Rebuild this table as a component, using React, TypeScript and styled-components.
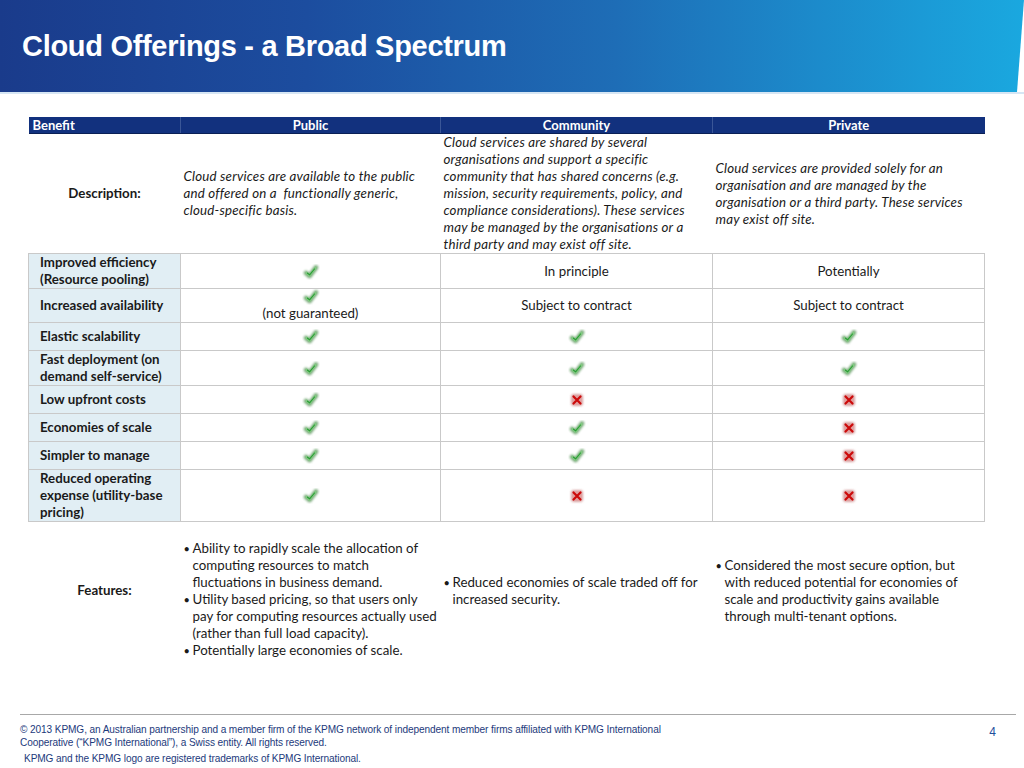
import React from "react";
import styled, { createGlobalStyle } from "styled-components";

const Global = createGlobalStyle`
  html, body { margin: 0; padding: 0; background: #ffffff; }
  body { font-family: "Lato", "Liberation Sans", sans-serif; }
`;

const Page = styled.div`
  width: 1024px;
  height: 768px;
  display: flex;
  flex-direction: column;
  overflow: hidden;
  background: #fff;
`;

const Banner = styled.header`
  height: 92px;
  display: flex;
  align-items: center;
  padding-left: 22px;
  box-sizing: border-box;
  background: linear-gradient(90deg, #1a3b8b 0%, #1c4d9f 30%, #1e6db6 60%, #1b9ad6 90%, #1aa8df 100%);
  clip-path: polygon(0 0, 100% 0, 1017px 100%, 0 100%);
`;

const BannerRule = styled.div`
  height: 2px;
  background: #d6e6f4;
`;

const Title = styled.h1`
  margin: 0;
  font-family: "Liberation Sans", Arial, sans-serif;
  font-weight: bold;
  font-size: 29px;
  color: #ffffff;
  letter-spacing: -0.3px;
`;

const TableWrap = styled.div`
  padding: 23px 0 0 28px;
`;

const Table = styled.table`
  border-collapse: collapse;
  table-layout: fixed;
  width: 956px;
  font-size: 13.3px;
  line-height: 17px;
  color: #1a1a1a;
`;

const HeadCell = styled.th<{ $left?: boolean }>`
  background: #12317e;
  color: #fff;
  font-weight: bold;
  font-size: 13px;
  height: 16px;
  padding: 0 4px;
  line-height: 16px;
  text-align: ${(p) => (p.$left ? "left" : "center")};
  border-left: 1px solid #3a5697;
  border-bottom: 1px solid #0a1f55;
  &:first-child { border-left: none; }
`;

const LabelCell = styled.td<{ $plain?: boolean }>`
  padding: 0 2px 0 11px;
  font-weight: bold;
  vertical-align: middle;
  text-align: left;
  background: ${(p) => (p.$plain ? "transparent" : "#e1eef4")};
  border: ${(p) => (p.$plain ? "none" : "1px solid #c9c9c9")};
  ${(p) => (p.$plain ? "text-align: center; padding: 0;" : "")}
`;

const Cell = styled.td<{ $h?: number }>`
  height: ${(p) => (p.$h ? `${p.$h}px` : "auto")};
  padding: 0;
  text-align: center;
  vertical-align: middle;
  border: 1px solid #c9c9c9;
`;

const DescRow = styled.tr`
  height: 116px;
  border-bottom: 1px solid #c9c9c9;
`;

const DescCell = styled.td`
  padding: 0 3px;
  vertical-align: middle;
  font-style: italic;
  letter-spacing: 0.2px;
  text-align: left;
`;

const FeatureCell = styled.td<{ $top?: number }>`
  padding: ${(p) => (p.$top ? `${p.$top}px` : "0")} 3px 0 3px;
  vertical-align: middle;
  text-align: left;
  height: 138px;
  box-sizing: border-box;
`;

const BulletList = styled.ul`
  list-style: none;
  margin: 0;
  padding: 0;
`;

const Bullet = styled.li`
  padding-left: 9px;
  text-indent: -9px;
  &::before {
    content: "•";
    display: inline-block;
    width: 9px;
    text-indent: 0;
    font-size: 11px;
  }
`;

const IconBox = styled.span`
  display: inline-flex;
  vertical-align: middle;
`;

const Stack = styled.div`
  display: flex;
  flex-direction: column;
  align-items: center;
  line-height: 17px;
`;

const Footer = styled.footer`
  margin: auto 8px 0 20px;
  border-top: 1px solid #a8a8a8;
  padding: 8px 0 3px 0;
  display: grid;
  grid-template-columns: 1fr auto;
  font-family: "Liberation Sans", Arial, sans-serif;
  color: #1d3a7c;
`;

const FooterText = styled.div`
  font-size: 10.1px;
  line-height: 13px;
  letter-spacing: -0.1px;
`;

const FooterNote = styled.div`
  margin-top: 3px;
  padding-left: 4px;
`;

const PageNum = styled.div`
  font-size: 12px;
  color: #1f4f9c;
  padding-right: 20px;
  padding-top: 2px;
`;

const Check = () => (
  <IconBox>
    <svg width="18" height="16" viewBox="0 0 18 16">
      <defs>
        <filter id="cb" x="-50%" y="-50%" width="200%" height="200%">
          <feGaussianBlur stdDeviation="1.2" />
        </filter>
      </defs>
      <path d="M4 9 L7.5 12 L14 3.5" fill="none" stroke="#5f9a5f" strokeWidth="4.8" strokeLinecap="round" strokeLinejoin="round" filter="url(#cb)" opacity="0.8" />
      <path d="M4.5 9 L7.5 11.5 L13.5 4" fill="none" stroke="#82c882" strokeWidth="2.6" strokeLinecap="round" strokeLinejoin="round" />
      <path d="M5.5 9.2 L7.6 10.8 L12.5 5" fill="none" stroke="#2a9b35" strokeWidth="1.1" strokeLinecap="round" strokeLinejoin="round" />
    </svg>
  </IconBox>
);

const Cross = () => (
  <IconBox>
    <svg width="18" height="18" viewBox="0 0 18 18">
      <defs>
        <filter id="xb" x="-50%" y="-50%" width="200%" height="200%">
          <feGaussianBlur stdDeviation="1.2" />
        </filter>
      </defs>
      <rect x="3" y="3" width="12" height="12" rx="3" fill="#c98080" opacity="0.75" filter="url(#xb)" />
      <rect x="4" y="4" width="10" height="10" rx="2" fill="#e2a3a3" opacity="0.8" />
      <path d="M5.5 5.5 L12.5 12.5 M12.5 5.5 L5.5 12.5" stroke="#cc0a0a" strokeWidth="2.2" strokeLinecap="round" />
    </svg>
  </IconBox>
);

type Mark = "check" | "cross" | string;

const rows: { label: React.ReactNode; h: number; pub: React.ReactNode; com: Mark; pri: Mark }[] = [
  { label: <>Improved efficiency<br />(Resource pooling)</>, h: 33, pub: "check", com: "In principle", pri: "Potentially" },
  {
    label: "Increased availability",
    h: 33,
    pub: (
      <Stack>
        <Check />
        <span>(not guaranteed)</span>
      </Stack>
    ),
    com: "Subject to contract",
    pri: "Subject to contract",
  },
  { label: "Elastic scalability", h: 27, pub: "check", com: "check", pri: "check" },
  { label: <>Fast deployment (on<br />demand self-service)</>, h: 34, pub: "check", com: "check", pri: "check" },
  { label: "Low upfront costs", h: 27, pub: "check", com: "cross", pri: "cross" },
  { label: "Economies of scale", h: 27, pub: "check", com: "check", pri: "cross" },
  { label: "Simpler to manage", h: 27, pub: "check", com: "check", pri: "cross" },
  { label: <>Reduced operating<br />expense (utility-base<br />pricing)</>, h: 50, pub: "check", com: "cross", pri: "cross" },
];

const render = (m: React.ReactNode) => {
  if (m === "check") return <Check />;
  if (m === "cross") return <Cross />;
  return m;
};

export default function App() {
  return (
    <Page>
      <Global />
      <Banner>
        <Title>Cloud Offerings - a Broad Spectrum</Title>
      </Banner>
      <BannerRule />
      <TableWrap>
        <Table>
          <colgroup>
            <col style={{ width: 152 }} />
            <col style={{ width: 260 }} />
            <col style={{ width: 272 }} />
            <col style={{ width: 272 }} />
          </colgroup>
          <thead>
            <tr>
              <HeadCell $left>Benefit</HeadCell>
              <HeadCell>Public</HeadCell>
              <HeadCell>Community</HeadCell>
              <HeadCell>Private</HeadCell>
            </tr>
          </thead>
          <tbody>
            <DescRow>
              <LabelCell $plain>Description:</LabelCell>
              <DescCell>
                Cloud services are available to the public and offered on a&nbsp; functionally generic, cloud-specific basis.
              </DescCell>
              <DescCell>
                Cloud services are shared by several organisations and support a specific community that has shared concerns (e.g. mission, security requirements, policy, and compliance considerations). These services may be managed by the organisations or a third party and may exist off site.
              </DescCell>
              <DescCell>
                Cloud services are provided solely for an organisation and are managed by the organisation or a third party. These services may exist off site.
              </DescCell>
            </DescRow>
            {rows.map((r, i) => (
              <tr key={i}>
                <LabelCell>{r.label}</LabelCell>
                <Cell $h={r.h}>{render(r.pub)}</Cell>
                <Cell>{render(r.com)}</Cell>
                <Cell>{render(r.pri)}</Cell>
              </tr>
            ))}
            <tr>
              <LabelCell $plain>Features:</LabelCell>
              <FeatureCell $top={18}>
                <BulletList>
                  <Bullet>Ability to rapidly scale the allocation of computing resources to match fluctuations in business demand.</Bullet>
                  <Bullet>Utility based pricing, so that users only pay for computing resources actually used (rather than full load capacity).</Bullet>
                  <Bullet>Potentially large economies of scale.</Bullet>
                </BulletList>
              </FeatureCell>
              <FeatureCell>
                <BulletList>
                  <Bullet>Reduced economies of scale traded off for increased security.</Bullet>
                </BulletList>
              </FeatureCell>
              <FeatureCell>
                <BulletList>
                  <Bullet>Considered the most secure option, but with reduced potential for economies of scale and productivity gains available through multi-tenant options.</Bullet>
                </BulletList>
              </FeatureCell>
            </tr>
          </tbody>
        </Table>
      </TableWrap>
      <Footer>
        <FooterText>
          © 2013 KPMG, an Australian partnership and a member firm of the KPMG network of independent member firms affiliated with KPMG International
          <br />
          Cooperative (“KPMG International”), a Swiss entity. All rights reserved.
          <FooterNote>KPMG and the KPMG logo are registered trademarks of KPMG International.</FooterNote>
        </FooterText>
        <PageNum>4</PageNum>
      </Footer>
    </Page>
  );
}
